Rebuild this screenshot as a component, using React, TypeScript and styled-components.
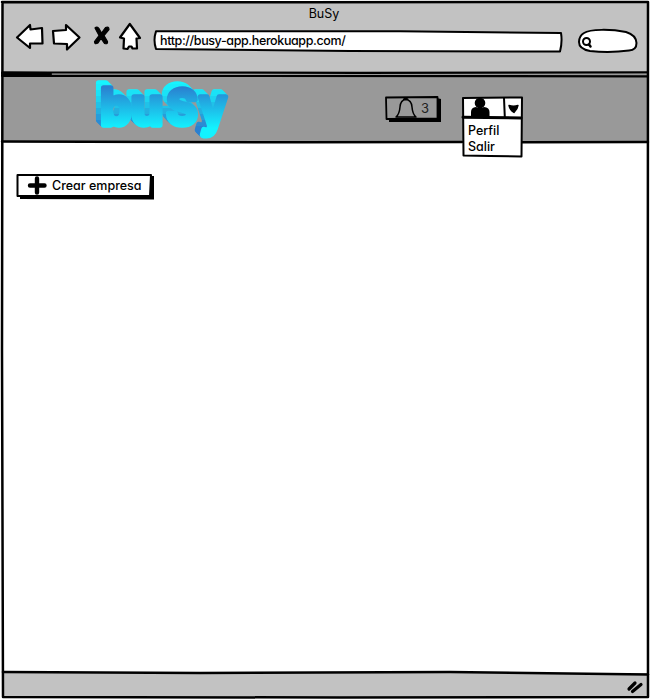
import React from "react";
import styled, { createGlobalStyle } from "styled-components";

const GlobalStyle = createGlobalStyle`
  * { box-sizing: border-box; }
  body { margin: 0; background: #fff; overflow: hidden; }
`;

const BrowserWindow = styled.div`
  position: relative;
  width: 650px;
  height: 700px;
  padding: 2px 2px 3px 2px;
  display: flex;
  flex-direction: column;
  font-family: Inter, "Noto Sans", sans-serif;
  font-feature-settings: "cv11" 1, "calt" 0;
  font-size: 13px;
  line-height: 16px;
  color: #000;
`;

const Chrome = styled.div`
  height: 72px;
  background: #c2c2c2;
  display: flex;
  flex-direction: column;
`;

const TitleText = styled.div`
  padding-top: 4px;
  height: 20px;
  padding-right: 2px;
  text-align: center;
  font-size: 12.500px;
  line-height: 16px;
`;

const Toolbar = styled.div`
  display: flex;
  align-items: flex-start;
  padding-left: 13px;
`;

const NavIcons = styled.div`
  display: flex;
  gap: 9px;
  width: 137px;
`;

/* Drawn outline that lies over the control it belongs to. */
const Outline = styled.svg`
  position: absolute;
  inset: 0;
  width: 100%;
  height: 100%;
  overflow: visible;
  pointer-events: none;
  fill: none;
  stroke: #000;
  stroke-width: 2;
  stroke-linejoin: round;
  stroke-linecap: round;
`;

const Glyph = styled.svg`
  position: relative;
  display: block;
  flex: none;
  overflow: visible;
  stroke: #000;
  stroke-width: 2.2;
  stroke-linejoin: round;
  stroke-linecap: round;
`;

const AddressBar = styled.div`
  position: relative;
  width: 411px;
  height: 22px;
  margin-top: 8px;
  padding: 3px 0 0 8px;
`;

const Label = styled.span<{ $spacing?: number; $size?: number }>`
  position: relative;
  display: block;
  white-space: nowrap;
  font-weight: 500;
  font-size: ${(p) => p.$size ?? 12.5}px;
  letter-spacing: ${(p) => p.$spacing ?? 0}px;
`;

const CreateLabel = styled(Label)`
  line-height: 24px;
`;

const SearchBox = styled.div`
  position: relative;
  width: 61px;
  height: 24px;
  margin: 7px 0 0 13px;
`;

const Header = styled.header`
  height: 67px;
  background: #999;
  display: flex;
  align-items: flex-start;
`;

const Logo = styled.svg`
  width: 140px;
  height: 64px;
  margin: 4px 0 0 90px;
  overflow: visible;
  font-family: Inter, sans-serif;
  font-weight: 700;
  stroke-linejoin: round;
`;

const NotificationButton = styled.div`
  position: relative;
  width: 56px;
  height: 26px;
  margin: 22px 0 0 153px;
  padding: 1px 0 0 10px;
  display: flex;
  gap: 4px;
`;

const Count = styled.span`
  position: relative;
  font-size: 13px;
  line-height: 22px;
  color: #222;
`;

const UserMenu = styled.div`
  position: relative;
  z-index: 2;
  width: 60px;
  height: 61px;
  margin: 22px 0 0 21px;
  display: flex;
  flex-direction: column;
`;

const UserTrigger = styled.div`
  position: relative;
  height: 22px;
  padding-left: 8px;
  display: flex;
  gap: 17px;
`;

const MenuItems = styled.div`
  position: relative;
  padding: 5px 0 0 6px;
`;

const Content = styled.main`
  flex: 1;
  background: #fff;
  padding: 33px 0 0 14px;
`;

const CreateButton = styled.div`
  position: relative;
  width: 139px;
  height: 26px;
  padding: 0 0 0 11px;
  display: flex;
  gap: 5px;
`;

const StatusBar = styled.footer`
  height: 24px;
  background: #c2c2c2;
  display: flex;
  justify-content: flex-end;
  padding: 8px 5px 0 0;
`;

const LETTERS = [
  { ch: "b", x: 8.5, size: 51, width: 31 },
  { ch: "u", x: 39, size: 51, width: 32 },
  { ch: "S", x: 74.5, size: 50, width: 31 },
  { ch: "y", x: 107.5, size: 51, width: 27 },
];

const DEPTH = [1, 2, 3, 4, 5];

const SIDE_BANDS = ["#16f4ff", "#17eefc", "#1ae2f6", "#1dd3ef", "#20c2e8", "#24b0e0", "#279dda", "#2a8cd4", "#2b80d0", "#2b80d0"];

function BusyLogo() {
  return (
    <Logo viewBox="0 0 140 64" role="img" aria-label="buSy">
      <defs>
        <linearGradient id="face" gradientUnits="userSpaceOnUse" x1="0" y1="9" x2="0" y2="50">
          <stop offset="0" stopColor="#2a80d0" />
          <stop offset="1" stopColor="#13f2ff" />
        </linearGradient>
        <filter id="extrude" filterUnits="userSpaceOnUse" x="-5" y="-5" width="155" height="75" colorInterpolationFilters="sRGB">
          {DEPTH.map((d) => (
            <feOffset key={d} in="SourceAlpha" dx={-d} dy={-d} result={`step${d}`} />
          ))}
          <feMerge result="solid">
            {DEPTH.map((d) => (
              <feMergeNode key={d} in={`step${d}`} />
            ))}
          </feMerge>
          {SIDE_BANDS.map((color, i) => (
            <feFlood key={i} x="-5" y={i * 6} width="155" height={6} floodColor={color} result={`band${i}`} />
          ))}
          <feMerge result="bands">
            {SIDE_BANDS.map((_, i) => (
              <feMergeNode key={i} in={`band${i}`} />
            ))}
          </feMerge>
          <feComposite in="bands" in2="solid" operator="in" result="side" />
          <feMerge>
            <feMergeNode in="side" />
            <feMergeNode in="SourceGraphic" />
          </feMerge>
        </filter>
      </defs>
      <g fill="url(#face)" stroke="url(#face)" strokeWidth={5.500} filter="url(#extrude)">
        {LETTERS.map((l) => (
          <text key={l.ch} x={l.x} y="47" fontSize={l.size} textLength={l.width} lengthAdjust="spacingAndGlyphs">
            {l.ch}
          </text>
        ))}
      </g>
    </Logo>
  );
}

export default function App() {
  return (
    <>
      <GlobalStyle />
      <BrowserWindow>
        <Chrome>
          <TitleText>BuSy</TitleText>
          <Toolbar>
            <NavIcons>
              <Glyph width="28" height="30" viewBox="15 22 28 30" fill="#fff">
                <path d="M17 37.5 L30 25 L30.500 29.500 L42 28 L42.500 43.500 L30 43.500 L30 48 Z" />
              </Glyph>
              <Glyph width="28" height="30" viewBox="53 22 28 30" fill="#fff">
                <path d="M54 31 L67 30 L67 25 L80.500 37.500 L68 49.500 L68 44 L55 43.500 Z" />
              </Glyph>
              <Glyph width="18" height="30" viewBox="89 22 18 30" fill="#000">
                <path
                  strokeWidth="1.200"
                  d="M95 28 Q97 26 99 28.500 L101.500 33 L105.500 27.500 Q109 26 109 29.500 L104 35.500 L107.500 41.500 Q108 44.500 104.500 43.500 L101 38.500 L98 43 Q94.500 45 94.500 41.500 L99 35.500 Z"
                />
              </Glyph>
              <Glyph width="24" height="30" viewBox="116 22 24 30" fill="#fff">
                <path d="M129.800 24 L140 38 L136.500 38.500 L137 48.500 L132.500 48.500 L131.500 46.500 L129 46.500 L127.500 49 L123.500 48.500 L124 38.500 L120 37.500 Z" />
              </Glyph>
            </NavIcons>
            <AddressBar>
              <Outline viewBox="152 30 411 22">
                <path fill="#fff" d="M156 31.300 L400 31.300 L561 33 Q562.500 42 560 51.500 L350 51 L156 49 Q153 40 156 31.300 Z" />
              </Outline>
              <Label $size={12.5} $spacing={-0.38}>http://busy-app.herokuapp.com/</Label>
            </AddressBar>
            <SearchBox>
              <Outline viewBox="576 29 61 24">
                <path fill="#fff" d="M584 33 C590 29 611 29 626 32 Q636 35 636.500 43 Q636.500 50 629 50.500 Q610 53 590 51 Q579 49 579 42 Q579 36 584 33 Z" />
                <circle cx="586.500" cy="41.500" r="3.500" />
                <path strokeWidth="2.500" d="M589 44.500 L590.500 46.500" />
              </Outline>
            </SearchBox>
          </Toolbar>
        </Chrome>
        <Header>
          <BusyLogo />
          <NotificationButton>
            <Outline viewBox="385 96 56 26">
              <path fill="#000" stroke="none" d="M437 98 L441 99 L441 122 L389 122 L389 119 L437 119 Z" />
              <path fill="#999" strokeWidth="1.800" d="M386 97.500 L437.500 97 L437.500 118.500 L386.500 119 Z" />
            </Outline>
            <Glyph width="22" height="22" viewBox="395 97 22 22" fill="none">
              <path
                strokeWidth="1.500"
                d="M396 117 Q399.500 114 400 107 Q400.500 100 405.800 99.500 Q411.500 100 412 107 Q412.500 114 416 117 Z M403.500 99.500 Q405.800 97 408 99.500"
              />
            </Glyph>
            <Count>3</Count>
          </NotificationButton>
          <UserMenu>
            <Outline viewBox="462 96 60 61">
              <path fill="#fff" d="M463 98 L522 97.500 L521.500 156.500 L490 156 L463.500 155.500 Z" />
              <path strokeWidth="3" d="M463 117.300 L521 118" />
              <path d="M504 98 L504.800 117" />
            </Outline>
            <UserTrigger>
              <Glyph width="22" height="22" viewBox="470 96 22 22">
                <ellipse stroke="none" cx="480" cy="103" rx="5.300" ry="5.300" />
                <path stroke="none" d="M471 117.500 V112 Q471 107.500 476 107 Q480 109 484 107 Q489.500 107.500 489.500 112 V117.500 Z" />
              </Glyph>
              <Glyph width="10" height="22" viewBox="509 96 10 22">
                <path strokeWidth="1.400" d="M509 105.500 Q513.500 107 518 105.500 Q517.500 109.500 514 112.500 Q510 110 509 105.500 Z" fill="#000" />
              </Glyph>
            </UserTrigger>
            <MenuItems>
              <Label>Perfil</Label>
              <Label>Salir</Label>
            </MenuItems>
          </UserMenu>
        </Header>
        <Content>
          <CreateButton>
            <Outline viewBox="16 174 139 26">
              <path fill="#000" stroke="none" d="M150 176 L154 176 L154 199.500 L20 199 L20 195 L150 195 Z" />
              <path fill="#fff" d="M17.500 175 L151 175 L150 196 L17.500 196 Z" />
            </Outline>
            <Glyph width="20" height="23" viewBox="27 174 20 23">
              <path strokeWidth="4.400" d="M30 185.500 H44.500 M37 178.500 V192.500" />
            </Glyph>
            <CreateLabel $size={12.5}>Crear empresa</CreateLabel>
          </CreateButton>
        </Content>
        <StatusBar>
          <Glyph width="16" height="14" viewBox="628 681 16 14">
            <path strokeWidth="3.200" d="M630 689 L636 683 M633.500 691.500 L642 684.500" />
          </Glyph>
        </StatusBar>
        <Outline viewBox="0 0 650 700">
          <path strokeWidth="2.500" d="M2 2 L300 2.300 L648 2 L647.800 300 L648 697 L340 697.500 L3 697 L2 350 L2.500 3" />
          <path strokeWidth="2.200" d="M2 72.500 L360 72.800 L648 72.300" />
          <path strokeWidth="2.200" d="M2 75.800 L648 76.300" />
          <path strokeWidth="4" d="M3 73.500 L50 74" />
          <path strokeWidth="2.400" d="M2 141.500 L300 142.300 L462 142" />
          <path strokeWidth="2.400" d="M522 142.200 L648 142" />
          <path strokeWidth="2.600" d="M3 672 L200 673 L450 672 L648 674.500" />
        </Outline>
      </BrowserWindow>
    </>
  );
}
